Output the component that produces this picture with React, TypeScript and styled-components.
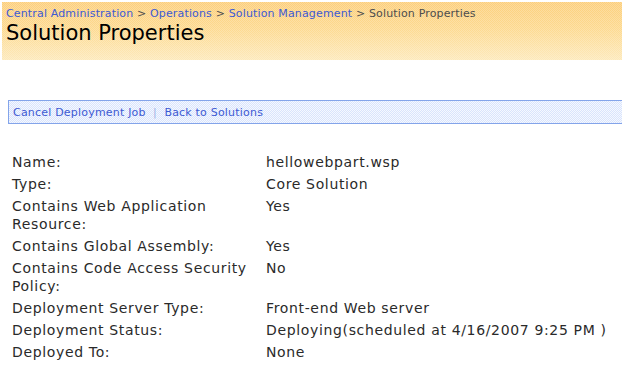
import React from 'react';
import styled, { createGlobalStyle } from 'styled-components';

const GlobalStyle = createGlobalStyle`
  html, body {
    margin: 0;
    padding: 0;
    background: #ffffff;
    font-family: "DejaVu Sans", Verdana, sans-serif;
  }
`;

const Page = styled.div`
  width: 622px;
  height: 371px;
  overflow: hidden;
  padding-top: 2px;
  box-sizing: border-box;
`;

const TitleArea = styled.div`
  margin-left: 2px;
  height: 58px;
  padding: 5px 0 0 4px;
  box-sizing: border-box;
  background-color: #fde3a6;
  background-image:
    repeating-conic-gradient(rgba(255, 255, 255, 0.22) 0 25%, transparent 0 50%),
    linear-gradient(to bottom, #fccf7c 0%, #fdd98f 45%, #fde9bb 100%);
  background-size: 2px 2px, 100% 100%;
`;

const Breadcrumb = styled.div`
  font-size: 11px;
  line-height: 13px;
  letter-spacing: 0.15px;
  white-space: pre;
`;

const Crumb = styled.span<{ $current?: boolean }>`
  color: ${({ $current }) => ($current ? '#4d4d4d' : '#3d5ad3')};
`;

const Sep = styled.span`
  color: #4d4d4d;
`;

const PageTitle = styled.h1`
  margin: 0;
  font-size: 21px;
  font-weight: normal;
  line-height: 26px;
  color: #000000;
`;

const Toolbar = styled.div`
  margin: 40px 0 0 8px;
  height: 24px;
  display: flex;
  align-items: center;
  padding-left: 4px;
  box-sizing: border-box;
  border: 1px solid #83a4ea;
  border-right: none;
  background-color: #e6eefd;
  background-image: repeating-conic-gradient(#d9e4fc 0 25%, #f5f8ff 0 50%);
  background-size: 2px 2px;
  font-size: 11px;
  letter-spacing: 0.2px;
  white-space: pre;
`;

const ToolLink = styled.span`
  color: #3d5ad3;
`;

const ToolSep = styled.span`
  color: #9fb4e6;
`;

const Props = styled.div`
  margin-top: 27px;
  padding-left: 12px;
  display: grid;
  grid-template-columns: 254px 1fr;
  font-size: 14px;
  letter-spacing: 0.65px;
  line-height: 18px;
  color: #2a2a2a;
`;

const Label = styled.div`
  padding: 2px 14px 2px 0;
`;

const Value = styled.div`
  padding: 2px 0;
  white-space: nowrap;
`;

const rows: [string, string][] = [
  ['Name:', 'hellowebpart.wsp'],
  ['Type:', 'Core Solution'],
  ['Contains Web Application Resource:', 'Yes'],
  ['Contains Global Assembly:', 'Yes'],
  ['Contains Code Access Security Policy:', 'No'],
  ['Deployment Server Type:', 'Front-end Web server'],
  ['Deployment Status:', 'Deploying(scheduled at 4/16/2007 9:25 PM )'],
  ['Deployed To:', 'None'],
];

const App = () => {
  return (
    <Page>
      <GlobalStyle />
      <TitleArea>
        <Breadcrumb>
          <Crumb>Central Administration</Crumb>
          <Sep> &gt; </Sep>
          <Crumb>Operations</Crumb>
          <Sep> &gt; </Sep>
          <Crumb>Solution Management</Crumb>
          <Sep> &gt; </Sep>
          <Crumb $current>Solution Properties</Crumb>
        </Breadcrumb>
        <PageTitle>Solution Properties</PageTitle>
      </TitleArea>
      <Toolbar>
        <ToolLink>Cancel Deployment Job</ToolLink>
        <ToolSep>  |  </ToolSep>
        <ToolLink>Back to Solutions</ToolLink>
      </Toolbar>
      <Props>
        {rows.map(([label, value]) => (
          <React.Fragment key={label}>
            <Label>{label}</Label>
            <Value>{value}</Value>
          </React.Fragment>
        ))}
      </Props>
    </Page>
  );
};

export default App;
